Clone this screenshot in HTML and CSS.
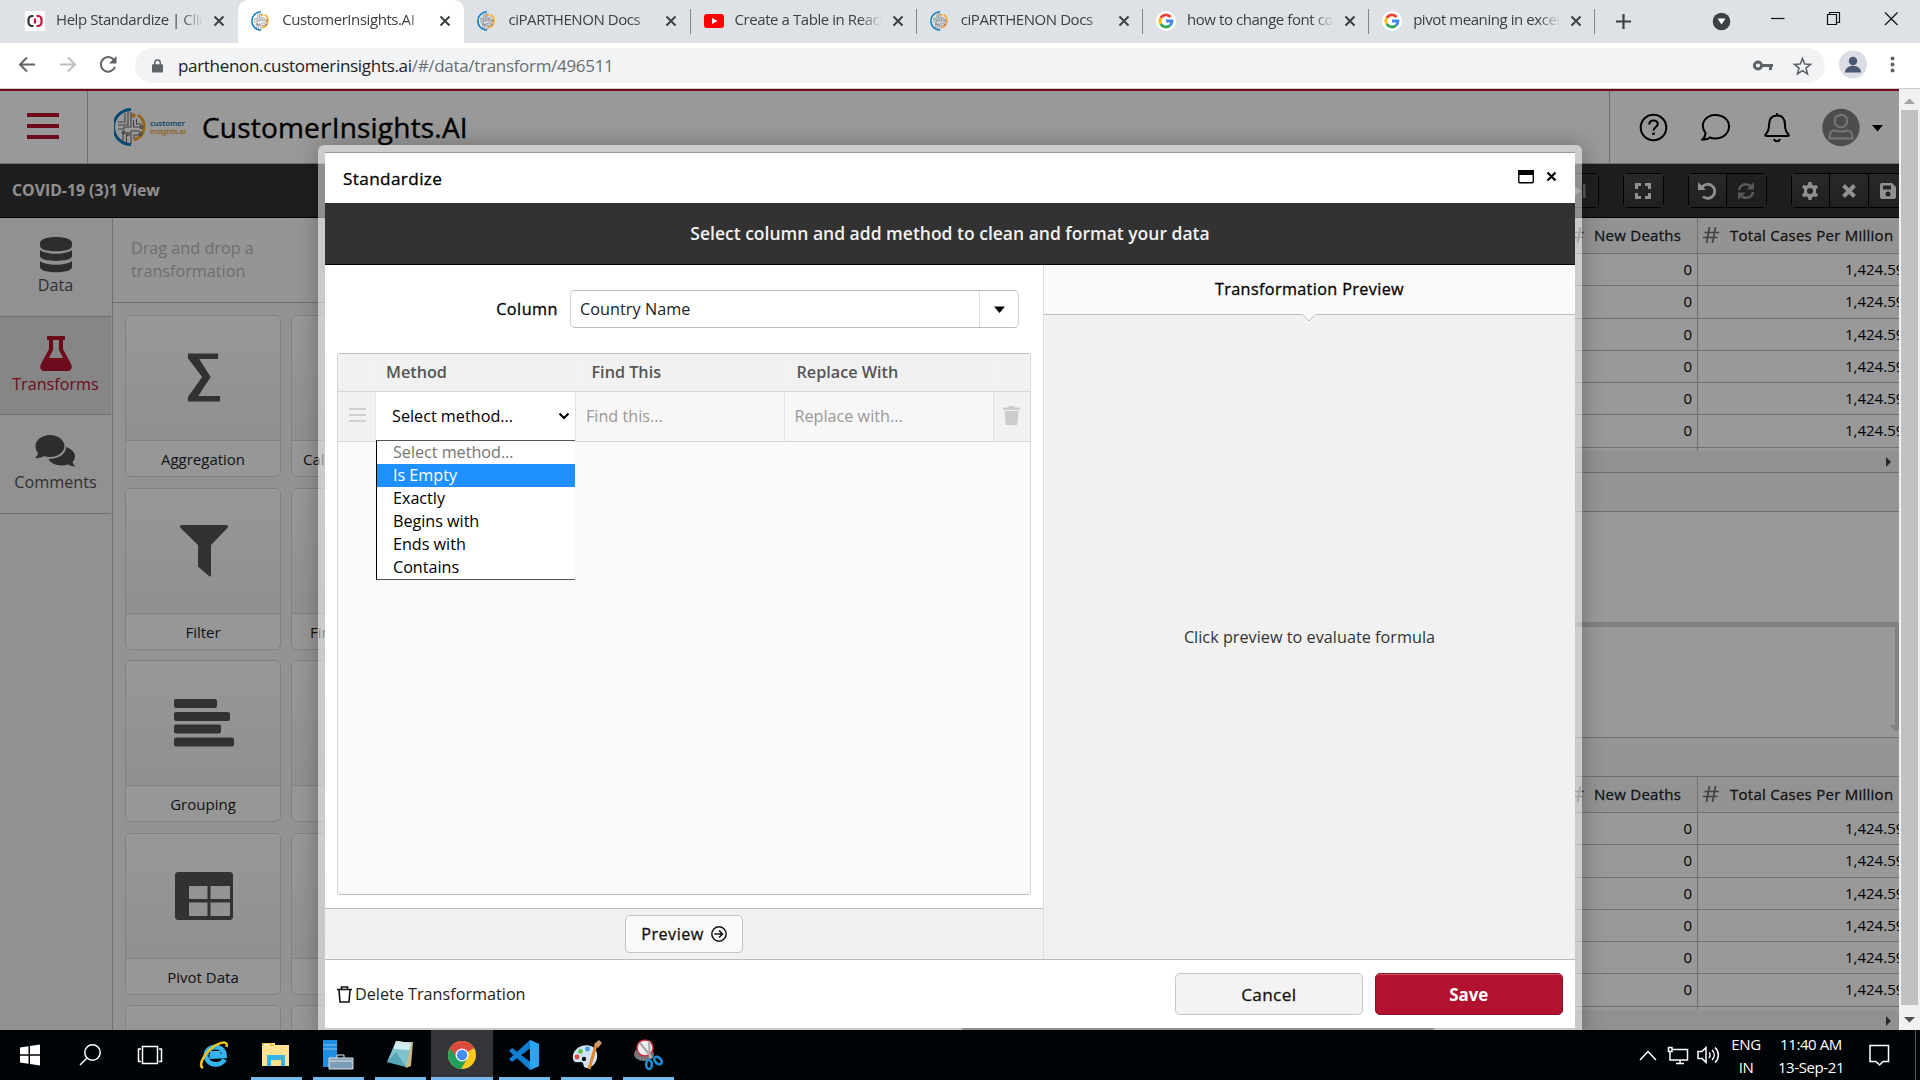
FILE: index.html
```html
<!DOCTYPE html>
<html lang="en">
<head>
<meta charset="utf-8">
<title>CustomerInsights.AI</title>
<link rel="stylesheet" href="styles.css">
</head>
<body>
<svg class="defs" aria-hidden="true">
  <symbol id="ci-mark" viewBox="0 0 34 38">
    <path d="M17 1.500A17.300 17.300 0 0 0 17 36.500" fill="none" stroke="#0a7ec4" stroke-width="3"/>
    <path d="M24 7A14 14 0 0 1 20 32" fill="none" stroke="#fbab2c" stroke-width="3.200"/>
    <circle cx="19.500" cy="7.500" r="2.200" fill="#fbab2c"/>
    <g fill="none" stroke="#6a6a6a" stroke-width="1.100"><path d="M11 5v9H4M14 3.500V17H4M17 4v15h-7v2H4M19.500 12v7h8M22.500 11v5h5M9 33v-8h3M12.500 35v-8H14M17 36V23h9M20 31v-4h5"/><circle cx="9.500" cy="24.500" r="1.400"/><circle cx="14" cy="26" r="1.400"/><circle cx="27.500" cy="19" r="1.400"/><circle cx="26.500" cy="26" r="1.400"/></g>
  </symbol>
  <symbol id="tab-x" viewBox="0 0 12 12"><path d="M1.500 1.500l9 9m0-9l-9 9" stroke="#3c4043" stroke-width="2" fill="none"/></symbol>
  <symbol id="google" viewBox="0 0 20 20"><circle cx="10" cy="10" r="10" fill="#fff"/><g fill="none" stroke-width="2.800"><path d="M14.600 6A6 6 0 0 0 4.800 7" stroke="#ea4335"/><path d="M4.800 7a6 6 0 0 0 0 6" stroke="#fbbc05"/><path d="M4.800 13a6 6 0 0 0 9 1.600" stroke="#34a853"/><path d="M13.800 14.600A6 6 0 0 0 16 10h-6" stroke="#4285f4"/></g></symbol>
  <symbol id="hash" viewBox="0 0 16 16"><path d="M6.500 0L3.500 16M12.500 0l-3 16M1.500 5.500H16M0 10.500h14.500" stroke="#6e6e6e" stroke-width="1.700" fill="none"/></symbol>
</svg>

<div class="tabs">
  <div class="tab"><svg class="fav" viewBox="0 0 20 20"><path d="M0 0h20v20H0z" fill="#fff"/><path d="M8.500 5H7a3.500 3.500 0 0 0-3.500 3.500v3A3.500 3.500 0 0 0 7 15h1.500" fill="none" stroke="#333" stroke-width="2.200"/><path d="M11.500 5H13a3.500 3.500 0 0 1 3.500 3.500v3A3.500 3.500 0 0 1 13 15h-1.500M10 7.500v5" fill="none" stroke="#c4123a" stroke-width="2.200"/></svg><span class="tab-title">Help Standardize | Click</span><svg class="tab-x"><use href="#tab-x"/></svg></div>
  <div class="tab tab-on"><svg class="fav"><use href="#ci-mark"/></svg><span class="tab-title">CustomerInsights.AI</span><svg class="tab-x"><use href="#tab-x"/></svg></div>
  <div class="tab tab-sep"><svg class="fav"><use href="#ci-mark"/></svg><span class="tab-title">ciPARTHENON Docs</span><svg class="tab-x"><use href="#tab-x"/></svg></div>
  <div class="tab tab-sep"><svg class="fav" viewBox="0 0 20 20"><rect y="3" width="20" height="14" rx="3" fill="#f00"/><path d="M8 7l5.500 3L8 13z" fill="#fff"/></svg><span class="tab-title">Create a Table in React</span><svg class="tab-x"><use href="#tab-x"/></svg></div>
  <div class="tab tab-sep"><svg class="fav"><use href="#ci-mark"/></svg><span class="tab-title">ciPARTHENON Docs</span><svg class="tab-x"><use href="#tab-x"/></svg></div>
  <div class="tab tab-sep"><svg class="fav"><use href="#google"/></svg><span class="tab-title">how to change font color</span><svg class="tab-x"><use href="#tab-x"/></svg></div>
  <div class="tab tab-sep"><svg class="fav"><use href="#google"/></svg><span class="tab-title">pivot meaning in excel</span><svg class="tab-x"><use href="#tab-x"/></svg></div>
  <svg class="win-controls" viewBox="0 0 320 43">
    <path d="M16 21.500h15M23.500 14v15" stroke="#3c4043" stroke-width="2.200"/>
    <circle cx="121.500" cy="21.500" r="8.800" fill="#3c4043"/><path d="M117.500 18.500h8l-4 6z" fill="#fff"/>
    <g fill="none" stroke="#111" stroke-width="1.200"><path d="M171 18.500h13.500"/><path d="M227.500 14.500h9v10h-9zM229.500 14.500v-2h10v10h-3"/><path d="M285 12.500l12.500 12.500m0-12.500L285 25"/></g>
  </svg>
</div>

<div class="toolbar">
  <svg class="nav" viewBox="0 0 135 45">
    <g fill="none" stroke-width="2"><path d="M35 21.500H20m7-7l-7 7 7 7" stroke="#5f6368"/><path d="M60 21.500h15m-7-7l7 7-7 7" stroke="#bbbdc0"/><path d="M114 17a7.300 7.300 0 1 0 1 7" stroke="#5f6368"/></g><path d="M116.500 13v7.500H109z" fill="#5f6368"/>
  </svg>
  <div class="omnibox">
    <svg class="lock" viewBox="0 0 12 14"><rect x="0" y="5" width="12" height="9" rx="1" fill="#5f6368"/><path d="M3 6V3.500a3 3 0 0 1 6 0V6" fill="none" stroke="#5f6368" stroke-width="1.600"/></svg>
    <span class="url">parthenon.customerinsights.ai<i>/#/data/transform/496511</i></span>
    <svg class="omni-icons" viewBox="0 0 70 34"><g fill="none" stroke="#5f6368"><circle cx="13" cy="16.500" r="3.600" stroke-width="3"/><path d="M17 16.500h11M25.500 17v4" stroke-width="3"/><path d="M57.500 9.500l2.200 5.500 5.800.4-4.500 3.700 1.500 5.800-5-3.200-5 3.200 1.500-5.800-4.500-3.700 5.800-.4z" stroke-width="1.600"/></g></svg>
  </div>
  <svg class="profile" viewBox="0 0 95 45"><circle cx="28" cy="21.500" r="14" fill="#dadde3"/><circle cx="28" cy="18" r="4.200" fill="#4b5873"/><path d="M20 29.500c0-9 16-9 16 0z" fill="#4b5873"/><g fill="#5f6368"><circle cx="67.500" cy="15.500" r="2"/><circle cx="67.500" cy="21.500" r="2"/><circle cx="67.500" cy="27.500" r="2"/></g></svg>
</div>

<div class="viewport">
  <div class="page">
    <header class="header">
      <div class="menu-btn"><i></i><i></i><i></i></div>
      <svg class="logo" viewBox="0 0 34 38"><use href="#ci-mark"/></svg>
      <div class="logo-text"><b>customer</b><span>insights.ai</span></div>
      <h1 class="brand">CustomerInsights.AI</h1>
      <svg class="header-icons" viewBox="0 0 289 71">
        <g fill="none" stroke="#000" stroke-width="2">
          <circle cx="43.500" cy="36" r="12.800"/><path d="M39.300 33c0-5.500 8.500-5 8.500-.5 0 3-4.300 3-4.300 6.500"/><path d="M43.500 41v2.500" stroke-width="2.600"/>
          <path d="M95.500 41.500c-7-10 1-18 10-18 8 0 13.500 5 13.500 11.500S113 47 105.500 47c-2.500 0-4-.3-5.500-1-2 1.500-5 2.300-7.500 2 2-1.800 3-4 3-6.500z"/>
          <path d="M155.500 43c3-3 3.500-5 3.500-9.500 0-6 3-9.500 8-9.500s8 3.500 8 9.500c0 4.500.5 6.500 3.500 9.500.5 1.500 0 1.500-1 1.500h-21c-1 0-1.500 0-1-1.500zM167 24v-2.500M164 47.500c.8 3 5.200 3 6 0"/>
        </g>
        <circle cx="231" cy="36" r="18.700" fill="#808080"/><g fill="none" stroke="#fff" stroke-opacity=".55" stroke-width="2"><circle cx="231" cy="29.500" r="6.300"/><path d="M219.500 47c0-9 5-8.500 7.500-7.500 3 .8 5 .8 8 0 2.500-1 7.500-1.500 7.500 7.500z"/></g>
        <path d="M262 33.500h11l-5.500 6.500z" fill="#000"/>
      </svg>
    </header>
    <div class="viewbar">
      <span class="view-name">COVID-19 (3)1 View</span>
      <div class="btns">
        <div class="btn dim"><svg viewBox="0 0 18 18"><path d="M2 2l9 7-9 7zM13 2h2.500v14H13z"/></svg></div>
      </div>
      <div class="btns"><div class="btn"><svg viewBox="0 0 18 18"><path d="M1 1h6v3H4v3H1zM11 1h6v6h-3V4h-3zM1 11h3v3h3v3H1zM14 11h3v6h-6v-3h3z"/></svg></div></div>
      <div class="btns"><div class="btn"><svg viewBox="0 0 18 18"><path d="M3.500 6A7 7 0 1 1 5 14.500" fill="none" stroke="#f0f0f0" stroke-width="2.800"/><path d="M0 0v8h8z"/></svg></div><div class="btn dim"><svg viewBox="0 0 18 18"><path d="M2 8a7 7 0 0 1 12-3.500M16 10a7 7 0 0 1-12 3.500" fill="none" stroke="#f0f0f0" stroke-width="2.600"/><path d="M17 0v7.500H9.500zM1 18v-7.500h7.500z"/></svg></div></div>
      <div class="btns last"><div class="btn"><svg viewBox="0 0 18 18"><path d="M7.500 0h3l.5 2.600 2 1.100 2.400-.9 1.600 2.700-2 1.700v3.600l2 1.700-1.600 2.700-2.400-.9-2 1.100-.5 2.600h-3L7 15.400l-2-1.100-2.400.9L1 12.500l2-1.700V7.200L1 5.500l1.600-2.700 2.400.9 2-1.100zM9 6a3 3 0 1 0 0 6 3 3 0 0 0 0-6z" fill-rule="evenodd"/></svg></div><div class="btn"><svg viewBox="0 0 18 18"><path d="M3.500 3.500l11 11m0-11l-11 11" stroke="#f0f0f0" stroke-width="4"/></svg></div><div class="btn"><svg viewBox="0 0 18 18"><path d="M1 3a2 2 0 0 1 2-2h10l4 4v10a2 2 0 0 1-2 2H3a2 2 0 0 1-2-2zM4 3.500v4h8v-4zM9 9.500a2.500 2.500 0 1 0 0 5 2.500 2.500 0 0 0 0-5z" fill-rule="evenodd"/></svg></div></div>
    </div>
    <div class="work">
      <nav class="side">
        <div class="side-item"><svg width="32" height="36" viewBox="0 0 32 36"><path d="M0 6c0-8 32-8 32 0v3c0 7-32 7-32 0zM0 13c7 5 25 5 32 0v6c0 6.500-32 6.500-32 0zM0 24c7 5 25 5 32 0v6c0 7-32 7-32 0z"/></svg><span>Data</span></div>
        <div class="side-item on"><svg width="32" height="36" viewBox="0 0 32 36"><path d="M7 0h18v4h-2v9l8 15c2 4 0 7-3 7H4c-3 0-5-3-3-7l8-15V4H7zM13 4v10l-4 8h14l-4-8V4z" fill-rule="evenodd"/></svg><span>Transforms</span></div>
        <div class="side-item"><svg width="41" height="36" viewBox="0 0 41 36"><path d="M31 13c5 1.500 9 5 9 9.500 0 2.500-1.500 4.500-2.500 5.500.5 2 1.500 3 3 4.500-3 0-5.500-.8-7.500-2-8 2.500-17 0-19.500-5.500C24 25 31 20 31 13z"/><path d="M15 1c8 0 14.500 5 14.500 11S23 23 15 23c-2.500 0-4.500-.5-6-1-2 1.500-5 2-9 2 1.500-1.500 3-3 3-5-1.500-2-2.500-4-2.500-7C.5 6 7 1 15 1z"/></svg><span>Comments</span></div>
      </nav>
      <section class="palette">
        <p class="hint">Drag and drop a transformation</p>
        <div class="cards">
          <div class="card"><div class="pic"><svg width="34" height="52" viewBox="0 0 36 52"><path d="M1 0h32v6H13l12 19-13 20h23v6H1v-5l15-21L1 5z"/></svg></div><span>Aggregation</span></div>
          <div class="card cut"><div class="pic"></div><span>Calculated</span></div>
          <div class="card"><div class="pic"><svg width="48" height="52" viewBox="0 0 48 52"><path d="M1.500 0h45c1.500 0 2 2 1 3L31 20v30c0 1.500-1 2-2 1l-10-8.500c-.7-.6-1-1-1-2V20L.5 3c-1-1-.5-3 1-3z"/></svg></div><span>Filter</span></div>
          <div class="card cut fin"><div class="pic"></div><span>Find</span></div>
          <div class="card"><div class="pic"><svg width="60" height="48" viewBox="0 0 60 48"><rect width="43" height="9" rx="2"/><rect y="13" width="56" height="9" rx="2"/><rect y="25.500" width="47" height="9" rx="2"/><rect y="38.500" width="60" height="9" rx="2"/></svg></div><span>Grouping</span></div>
          <div class="card"><div class="pic"></div><span></span></div>
          <div class="card"><div class="pic"><svg width="58" height="48" viewBox="0 0 58 48"><path d="M2 0h54l2 2v44l-2 2H2l-2-2V2zM14 14v13h18.500V14zM35.500 14v13H55V14zM14 30.500V44h18.500V30.500zM35.500 30.500V44H55V30.500z" fill-rule="evenodd"/></svg></div><span>Pivot Data</span></div>
          <div class="card"><div class="pic"></div><span></span></div>
          <div class="card"><div class="pic"></div><span></span></div>
          <div class="card"><div class="pic"></div><span></span></div>
        </div>
      </section>
      <main class="data">
        <div class="grid">
          <div class="gr gh"><span></span><span><svg class="hash"><use href="#hash"/></svg>New Deaths</span><span><svg class="hash"><use href="#hash"/></svg>Total Cases Per Million</span></div>
          <div class="gr"><span></span><span>0</span><span>1,424.59</span></div>
          <div class="gr r2"><span></span><span>0</span><span>1,424.59</span></div>
          <div class="gr"><span></span><span>0</span><span>1,424.59</span></div>
          <div class="gr"><span></span><span>0</span><span>1,424.59</span></div>
          <div class="gr"><span></span><span>0</span><span>1,424.59</span></div>
          <div class="gr r2"><span></span><span>0</span><span>1,424.59</span></div>
          <div class="gr rest"><span></span><span></span><span></span></div>
        </div>
        <div class="hscroll"><i></i></div>
        <div class="strip"></div>
        <div class="flow"><div class="link"></div></div>
        <div class="strip"></div>
        <div class="grid">
          <div class="gr gh"><span></span><span><svg class="hash"><use href="#hash"/></svg>New Deaths</span><span><svg class="hash"><use href="#hash"/></svg>Total Cases Per Million</span></div>
          <div class="gr"><span></span><span>0</span><span>1,424.59</span></div>
          <div class="gr r2"><span></span><span>0</span><span>1,424.59</span></div>
          <div class="gr"><span></span><span>0</span><span>1,424.59</span></div>
          <div class="gr"><span></span><span>0</span><span>1,424.59</span></div>
          <div class="gr"><span></span><span>0</span><span>1,424.59</span></div>
          <div class="gr r2"><span></span><span>0</span><span>1,424.59</span></div>
          <div class="gr rest"><span></span><span></span><span></span></div>
        </div>
        <div class="hscroll low"><b></b><i></i></div>
      </main>
    </div>
    <div class="overlay"></div>
    <div class="modal">
      <div class="m-title"><span>Standardize</span><svg viewBox="0 0 36 16"><rect x=".8" y="1.800" width="14.500" height="12" rx="1" fill="#fff" stroke="#000" stroke-width="1.400"/><path d="M0 1h16v5H0z"/><path d="M29.500 3.500l8 8m0-8l-8 8" stroke="#000" stroke-width="2.200"/></svg></div>
      <div class="m-banner">Select column and add method to clean and format your data</div>
      <div class="m-body">
        <div class="m-left">
          <div class="col-row"><label>Column</label><div class="combo"><span>Country Name</span><i><svg width="11" height="7" viewBox="0 0 11 7"><path d="M0 .5h11L5.500 7z"/></svg></i></div></div>
          <div class="rules">
            <div class="rule rh"><span></span><span>Method</span><span>Find This</span><span>Replace With</span><span></span></div>
            <div class="rule rr">
              <span class="grip"><svg width="17" height="14" viewBox="0 0 17 14"><path d="M0 1h17M0 7h17M0 13h17" stroke="#d0d0d0" stroke-width="2"/></svg></span>
              <div class="pick"><span>Select method...</span><svg width="12" height="8" viewBox="0 0 12 8"><path d="M1.500 1.500L6 6l4.500-4.500" fill="none" stroke="#000" stroke-width="2"/></svg>
                <ul class="options"><li class="muted">Select method...</li><li class="sel">Is Empty</li><li>Exactly</li><li>Begins with</li><li>Ends with</li><li>Contains</li></ul>
              </div>
              <span class="ph">Find this...</span><span class="ph">Replace with...</span>
              <span class="bin"><svg width="17" height="19" viewBox="0 0 17 19"><path d="M0 1.500h5L6 0h5l1 1.500h5V4H0zM1.500 5h14l-1 12.500c0 1-.5 1.500-1.500 1.500H4c-1 0-1.500-.5-1.500-1.500z" fill="#ccc"/></svg></span>
            </div>
          </div>
          <div class="prev-bar"><div class="prev-btn">Preview<svg width="16" height="16" viewBox="0 0 16 16"><g fill="none" stroke="#111" stroke-width="1.500"><circle cx="8" cy="8" r="7.200"/><path d="M3.500 8h8M8 4.500L11.500 8 8 11.500"/></g></svg></div></div>
        </div>
        <div class="m-right">
          <div class="r-head">Transformation Preview<svg class="notch" width="14" height="8" viewBox="0 0 14 8"><path d="M0 0l7 7 7-7z" fill="#fafafa"/><path d="M.5 .5L7 7 13.500 .5" fill="none" stroke="#bcbcbc"/></svg></div>
          <div class="r-msg">Click preview to evaluate formula</div>
        </div>
      </div>
      <div class="m-foot"><svg width="15" height="17" viewBox="0 0 15 17"><path d="M0 3.500h15M4.500 3V1h6v2M2 4l1 12h9l1-12" fill="none" stroke="#111" stroke-width="1.600"/></svg><span class="del">Delete Transformation</span><div class="cancel">Cancel</div><div class="save">Save</div></div>
    </div>
  </div>
  <div class="vscroll"><svg width="11" height="6" viewBox="0 0 11 6"><path d="M0 6l5.500-5.500L11 6z" fill="#a3a3a3"/></svg><i></i><svg width="11" height="6" viewBox="0 0 11 6"><path d="M0 0l5.500 5.500L11 0z" fill="#505050"/></svg></div>
</div>

<div class="taskbar">
  <svg class="t-sys" viewBox="0 0 245 50">
    <path d="M20 17.500l8.500-1.200v8H20zM30 16l10-1.500v9.800H30zM20 25.800h8.500v8L20 32.600zM30 25.800h10v9.700L30 34z" fill="#fff"/>
    <g fill="none" stroke="#fff" stroke-width="1.500"><circle cx="92.500" cy="22.500" r="7.700"/><path d="M87 28l-7 7"/><path d="M142.500 16.500h15v17h-15zM141 19h-2.500v12.500h2.500M159 19h2.500v12.500H159"/></g>
    <path d="M224.500 29.500c-3 7-17.500 7-18.500-3.500-.8-11 18-13 18.500 0l-15 .5M210 23.300h10.500" fill="none" stroke="#35b4ee" stroke-width="4.800"/>
    <path d="M203 38c-6-3 3-17 13-23 8-4 12-3 10.500 2" fill="none" stroke="#f3c317" stroke-width="2.500"/>
  </svg>
  <div class="app"><svg viewBox="0 0 32 32"><path d="M2 4h13v2h14v21H2z" fill="#fde28f"/><path d="M2 4h10l2 3H2z" fill="#eebc3c"/><path d="M4 5h6v1.500H4z" fill="#fff"/><path d="M7 27V16h18v11h-4v-6H11v6z" fill="#35b2e7"/></svg></div>
  <div class="app"><svg viewBox="0 0 32 32"><path d="M1 1h14v27H1z" fill="#1e8ee0"/><path d="M1 6h14M1 10h14" stroke="#7cc4f3"/><path d="M7 19h24v11H7z" fill="#7f9cb5" stroke="#dce6ee"/><path d="M15 19v-3h7v3M8 22h22" stroke="#dce6ee" fill="none"/></svg></div>
  <div class="app"><svg viewBox="0 0 32 32"><path d="M12 3h17l-2 24-5 2z" fill="#c9b98a"/><path d="M12 2l15 2-5 24-19-5z" fill="#7fc3cf"/><path d="M12 2l15 2-1.500 7-16-1z" fill="#d3edf1"/><path d="M3 23l9-10 10 15z" fill="#3a93a4" opacity=".6"/><path d="M12 3l15 2" stroke="#ddd" stroke-width="2" stroke-dasharray="1.500 1"/></svg></div>
  <div class="app cur"><svg viewBox="0 0 32 32"><circle cx="16" cy="16" r="14" fill="#fbc91c"/><path d="M16 16L3.900 9A14 14 0 0 1 28.100 9z" fill="#dd4b3e"/><path d="M16 16L3.900 9A14 14 0 0 0 15 30l6-10z" fill="#1fa15d"/><path d="M9.500 9H28a14 14 0 0 0-24.100 0l5 8z" fill="#dd4b3e"/><circle cx="16" cy="16" r="6.500" fill="#fff"/><circle cx="16" cy="16" r="5.200" fill="#4a8af4"/></svg></div>
  <div class="app"><svg viewBox="0 0 32 32"><path d="M22 1l9 4v22l-9 4L1 12l3-3 20 15V8L4 23l-3-3z" fill="#0f7fd0"/><path d="M22 1l9 4v22l-9 4z" fill="#2ba5f3"/><path d="M22 10v12l-8-6z" fill="#000306"/></svg></div>
  <div class="app"><svg viewBox="0 0 32 32"><path d="M3 20C1 10 14 3 23 8c8 6 4 20-6 21-5 0-2-5-6-6-3-.5-7 2-8-3z" fill="#cfe3f2"/><circle cx="7" cy="18" r="2.400" fill="#e2493c"/><circle cx="10.500" cy="12.500" r="2.400" fill="#5fc244"/><circle cx="17.500" cy="10" r="2.400" fill="#3f9be6"/><circle cx="14" cy="20" r="2.200" fill="#111"/><path d="M26 6l-7 24" stroke="#e5872c" stroke-width="3"/><path d="M24 5l5-4 3 3-4 5z" fill="#c8996a"/></svg></div>
  <div class="app"><svg viewBox="0 0 32 32"><ellipse cx="12" cy="15" rx="10" ry="7" fill="#777"/><circle cx="13" cy="9" r="8" fill="#f3eef0" stroke="#d2293b" stroke-width="1.500"/><path d="M8 4l12 15M17 2l1 17" stroke="#aaa" stroke-width="2.200"/><g fill="none" stroke="#1d8fd8" stroke-width="2.600"><ellipse cx="17" cy="25.500" rx="2.800" ry="4.500"/><ellipse cx="26" cy="21.500" rx="4.500" ry="2.800" transform="rotate(45 26 21.500)"/></g></svg></div>
  <svg class="tray" viewBox="0 0 90 50"><g fill="none" stroke="#fff" stroke-width="1.500"><path d="M7 30l8-8.500 8 8.500"/><path d="M39 19.500h15.500V30H37V22M43 33.500h8M47 30v3.500M35.500 17.500h3.500v4h-3.500z"/><path d="M65 21.500h4l4-4v15l-4-4h-4zM76 22.500c1.500 1.500 1.500 4 0 5.500M79 20c3 3 3 7 0 10M82 17.500c4.500 4.500 4.500 10.500 0 15"/></g></svg>
  <div class="lang">ENG<br>IN</div>
  <div class="clock">11:40 AM<br>13-Sep-21</div>
  <svg class="note" viewBox="0 0 60 50"><path d="M10 15.500h18.500v16H23l-3.500 3.500-3.500-3.500H10z" fill="none" stroke="#fff" stroke-width="1.500"/><path d="M55.500 0v50" stroke="#555"/></svg>
</div>
</body>
</html>
```
FILE: styles.css
```css
* { box-sizing: border-box; }
body {
  margin: 0;
  width: 1920px;
  height: 1080px;
  overflow: hidden;
  display: flex;
  flex-direction: column;
  font: 16.2px/23px "Open Sans", "Noto Sans", sans-serif;
  color: #000;
}
svg { display: block; flex: none; }
.defs { position: absolute; width: 0; height: 0; }

/* browser tab strip */
.tabs { height: 43px; background: #dee1e6; display: flex; padding-left: 12px; flex: none; }
.tab {
  width: 226.2px;
  padding: 0 12px 1px 13px;
  display: flex;
  align-items: center;
  font-size: 15px;
  letter-spacing: -.43px;
  color: #3c4043;
  position: relative;
}
.tab-on { background: #fff; border-radius: 10px 10px 0 0; }
.tab-sep::after { content: ""; width: 1px; height: 25px; background: #80868b; position: absolute; right: 0; top: 9px; }
.fav { width: 20px; height: 20px; margin-right: 11px; }
.tab-title {
  width: 147px;
  height: 24px;
  line-height: 21px;
  overflow: hidden;
  white-space: nowrap;
  -webkit-mask-image: linear-gradient(90deg, #000 85%, transparent);
  mask-image: linear-gradient(90deg, #000 85%, transparent);
}
.tab-x { width: 12px; height: 12px; margin-left: 10px; }
.win-controls { width: 320px; height: 43px; margin-left: 4.600px; }

/* address bar */
.toolbar { height: 46px; flex: none; background: #fff; border-bottom: 1px solid #c9cbce; display: flex; }
.nav { width: 135px; height: 45px; }
.omnibox { width: 1690px; height: 35px; margin-top: 5px; border-radius: 18px; background: #f1f3f4; display: flex; align-items: center; }
.lock { width: 11px; height: 14px; margin-left: 17px; }
.url { flex: 1; margin-left: 15px; font-size: 17px; letter-spacing: -.31px; color: #202124; line-height: 34px; }
.url i { font-style: normal; color: #6a6e73; }
.omni-icons { width: 70px; height: 34px; margin-right: 10px; }
.profile { width: 95px; height: 45px; }

/* application */
.viewport { flex: 1; display: flex; min-height: 0; }
.page { width: 1899px; position: relative; overflow: hidden; background: #f2f2f2; display: flex; flex-direction: column; }
.overlay { position: absolute; inset: 0; background: rgba(0, 0, 0, .4); }
.vscroll { flex: 1; background: #f1f1f1; display: flex; flex-direction: column; align-items: center; justify-content: space-between; padding: 9px 0 7px; }
.vscroll i { width: 17px; height: 896px; background: #c1c1c1; margin: 6px 0 12px; }

.header { height: 75px; flex: none; background: #fff; border-top: 2px solid #b31330; border-bottom: 1px solid #bbb; display: flex; align-items: center; }
.menu-btn { width: 88px; height: 72px; border-right: 1px solid #bbb; padding: 22px 0 0 27px; display: flex; flex-direction: column; gap: 7px; }
.menu-btn i { width: 32px; height: 4px; background: #b31330; }
.logo { width: 34px; height: 38px; margin-left: 26px; }
.logo-text { width: 50px; margin-left: 2px; font-size: 7.800px; line-height: 8.500px; letter-spacing: -.1px; }
.logo-text b, .logo-text span { display: block; color: #0a6fae; font-weight: 600; }
.logo-text span { color: #eda43a; letter-spacing: -.2px; }
.brand { margin: 0 0 0 2px; font-size: 28px; font-weight: 400; letter-spacing: .2px; -webkit-text-stroke: .4px; line-height: 39px; flex: 1; }
.header-icons { width: 290px; height: 72px; border-left: 1px solid #bbb; }

.viewbar { height: 54px; flex: none; background: #323232; border-bottom: 1px solid #000; display: flex; align-items: center; padding-left: 12px; color: #f0f0f0; overflow: hidden; }
.view-name { flex: 1; font-size: 15.800px; font-weight: 700; }
.btns { display: flex; border: 1px solid #000; border-radius: 5px; margin-right: 24px; flex: none; }
.btns.last { margin-right: -9px; }
.btn { width: 38.500px; height: 33px; display: grid; place-items: center; border-right: 1px solid #000; background: linear-gradient(#454545, #363636); }
.btn:last-child { border-right: 0; }
.btn svg { width: 18px; height: 18px; fill: #f0f0f0; }
.btn.dim svg { opacity: .5; }
.btn.dim { background: #353535; }

.work { flex: 1; display: flex; min-height: 0; }
.side { width: 113px; border-right: 1px solid #bbb; flex: none; }
.side-item { height: 98.600px; border-bottom: 1px solid #bbb; display: flex; flex-direction: column; align-items: center; padding-top: 19px; color: #505050; margin-right: 1px; }
.side-item svg { fill: #4b4b4b; }
.side-item span { line-height: 24px; }
.side-item.on { background: #dfdfdf; color: #b31330; }
.side-item.on svg { fill: #b31330; }

.palette { width: 383px; background: #f5f5f5; flex: none; }
.hint { margin: 0; height: 85px; padding: 19px 200px 0 18px; color: #b8b8b8; border-bottom: 1px solid #bbb; background: #f9f9f9; }
.cards { display: grid; grid-template-columns: 156px 156px; gap: 10.500px 10px; padding: 12px; }
.card { height: 162px; border: 1px solid #d8d8d8; border-radius: 6px; background: #fcfcfc; text-align: center; font-size: 15px; overflow: hidden; color: #222; }
.pic { height: 125px; border-bottom: 1px solid #d8d8d8; background: linear-gradient(#fdfdfd, #f0f0f0); display: grid; place-items: center; margin-bottom: 7px; padding-left: 1px; }
.pic svg { fill: #545454; }
.cut { text-align: left; }
.cut span { padding-left: 11px; }
.fin span { padding-left: 18px; }

.data { flex: 1; min-width: 0; background: #fff; display: flex; flex-direction: column; }
.gr { display: grid; grid-template-columns: 1066px 136px 201px; height: 32px; border-bottom: 1px solid #bbb; font-size: 15px; line-height: 30px; }
.gr.r2 { height: 33px; }
.gr.rest { height: 3px; border: 0; }
.gr > span { border-right: 1px solid #bbb; text-align: right; padding-right: 5px; }
.gr > span:last-child { border: 0; padding: 0 0 0 147px; text-align: left; white-space: nowrap; overflow: hidden; }
.gr.gh { height: 36px; background: #f5f5f5; color: #222; letter-spacing: .26px; -webkit-text-stroke: .3px; }
.gr.gh > span, .gr.gh > span:last-child { display: flex; align-items: center; padding: 0 0 2px 6px; }
.hash { width: 16px; height: 16px; margin-right: 10px; }
.gh > span:last-child .hash { margin-left: -1px; margin-right: 11px; }
.hscroll { height: 22px; background: #f2f2f2; border-bottom: 1px solid #bbb; display: flex; align-items: center; justify-content: flex-end; padding-right: 8px; flex: none; }
.hscroll i { border: 5px solid transparent; border-left-color: #444; border-right: 0; }
.hscroll.low { border: 0; }
.hscroll b { width: 472px; height: 22px; background: #333; margin-right: 452px; }
.strip { height: 39px; background: #f9f9f9; border-bottom: 1px solid #bbb; flex: none; }
.flow { height: 226px; border-bottom: 1px solid #bbb; padding-top: 110px; flex: none; }
.link { height: 105px; border-top: 5px solid #d8d8d8; border-right: 4px solid #d8d8d8; position: relative; }
.link::after { content: ""; position: absolute; right: -8px; bottom: -5px; border: 7px solid transparent; border-top-color: #d8d8d8; border-bottom: 0; }

/* dialog */
.modal {
  position: absolute;
  left: 318px;
  top: 56px;
  width: 1264px;
  height: 892px;
  padding: 7px;
  border-radius: 6px;
  background: rgba(255, 255, 255, .5);
  box-shadow: 0 0 22px rgba(0, 0, 0, .28);
  display: flex;
  flex-direction: column;
}
.m-title, .m-banner, .m-body, .m-foot { width: 1250px; }
.m-title { height: 51px; flex: none; background: #fff; border-top: 1px solid #999; display: flex; align-items: center; justify-content: space-between; padding: 0 21px 0 18px; font-size: 17.2px; letter-spacing: .36px; -webkit-text-stroke: .3px; }
.m-title svg { width: 36px; height: 16px; overflow: visible; margin-bottom: 2px; }
.m-banner { height: 62px; flex: none; background: #323232; border-bottom: 1px solid #000; color: #f2f2f2; font-size: 17.5px; font-weight: 600; text-align: center; line-height: 60px; }
.m-body { height: 695px; flex: none; display: flex; background: #fff; border-bottom: 1px solid #bcbcbc; }
.m-left { width: 719px; border-right: 1px solid #ddd; display: flex; flex-direction: column; }
.col-row { height: 88px; display: flex; padding: 25px 24px 0 0; justify-content: flex-end; }
.col-row label { letter-spacing: .5px; -webkit-text-stroke: .3px; margin-right: 12px; line-height: 38px; }
.combo { width: 449px; height: 38px; border: 1px solid #d2d2d2; border-top-color: #bbb; border-bottom-color: #bbb; border-radius: 5px; display: flex; line-height: 36px; }
.combo span { flex: 1; padding-left: 9px; letter-spacing: .05px; color: #222; }
.combo i { width: 39px; border-left: 1px solid #ddd; display: grid; place-items: center; }
.rules { flex: 1; margin: 0 12px 13px; border: 1px solid #d5d5d5; border-top-color: #bcbcbc; border-bottom-color: #bcbcbc; border-radius: 3px; background: #fafafa; }
.rule { display: grid; border-bottom: 1px solid #d8d8d8; }
.rh { grid-template-columns: 38px 205.500px 205px 206px 1fr; height: 38px; background: #f1f1f1; color: #555; font-weight: 600; line-height: 37px; }
.rh span { border-right: 1px solid #f5f5f5; padding-left: 10px; }
.rr { grid-template-columns: 38px 199px 208.500px 209px 1fr; height: 50px; background: #f7f7f7; line-height: 48px; }
.grip, .bin { display: grid; place-items: center; background: #f1f1f1; padding-bottom: 3px; }
.grip { border-right: 1px solid #e6e6e6; padding-left: 2px; }
.pick { background: #fff; display: flex; align-items: center; justify-content: space-between; padding: 0 5px 1px 16px; line-height: 47px; position: relative; }
.options { position: absolute; left: 0; top: 48px; width: 199px; margin: 0; padding: 0; list-style: none; background: #fff; border: solid #555; border-width: 1px 0 1px 1px; border-left-color: #000; z-index: 2; line-height: 22px; }
.options li { height: 23px; padding-left: 16px; letter-spacing: -.03px; }
.options .muted { color: #757575; }
.options .sel { background: #1e90ff; color: #fff; }
.ph { color: #999; padding-left: 10px; border-left: 1px solid #e4e4e4; }
.bin { border-left: 1px solid #e4e4e4; }
.prev-bar { height: 51px; background: #f1f1f1; border-top: 1px solid #bcbcbc; display: grid; place-items: center; }
.prev-btn { width: 118px; height: 38px; background: #fafafa; border: 1px solid #c4c4c4; border-radius: 5px; display: flex; align-items: center; justify-content: center; gap: 7px; letter-spacing: .45px; -webkit-text-stroke: .3px; color: #111; }
.m-right { flex: 1; background: #f1f1f1; display: flex; flex-direction: column; }
.r-head { height: 50px; background: #fafafa; border-bottom: 1px solid #bcbcbc; text-align: center; letter-spacing: .37px; -webkit-text-stroke: .3px; line-height: 48px; position: relative; }
.notch { position: absolute; left: 258px; top: 49px; }
.r-msg { flex: 1; display: grid; place-items: center; color: #333; letter-spacing: .03px; }
.m-foot { height: 68px; flex: none; background: #fff; display: flex; align-items: center; padding: 0 12px; }
.del { flex: 1; margin-left: 3px; color: #222; }
.cancel, .save { width: 188.500px; height: 42px; border-radius: 5px; text-align: center; line-height: 42px; font-size: 17.2px; }
.cancel { background: #f3f3f3; border: 1px solid #c8c8c8; color: #111; margin-right: 11.500px; letter-spacing: .35px; -webkit-text-stroke: .3px; }
.save { background: #b31130; border: 1px solid #8a1029; box-shadow: inset 0 1px #cc5468; color: #fff; font-weight: 700; font-size: 16.900px; }

/* desktop taskbar */
.taskbar { height: 50px; flex: none; background: #000306; display: flex; color: #fff; }
.t-sys { width: 245px; height: 50px; }
.app { width: 62px; padding: 0 5.500px; display: flex; flex-direction: column; align-items: center; justify-content: space-between; }
.app svg { width: 32px; height: 32px; margin-top: 9px; }
.app::after { content: ""; width: 51px; height: 3px; background: #76b9ed; }
.app.cur { background: #34353a; padding: 0; }
.app.cur::after { width: 62px; }
.tray { width: 90px; height: 50px; margin-left: auto; }
.lang, .clock { font-size: 15px; line-height: 22.500px; letter-spacing: -.4px; text-align: center; padding-top: 3px; }
.lang { width: 46px; }
.clock { width: 84px; margin-right: 7px; }
.note { width: 60px; height: 50px; }
```
